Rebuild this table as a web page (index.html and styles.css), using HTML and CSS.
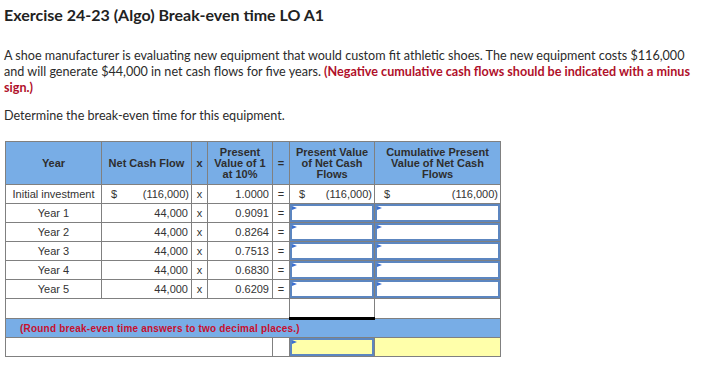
FILE: index.html
```html
<!DOCTYPE html>
<html>
<head>
<meta charset="utf-8">
<link rel="stylesheet" href="styles.css">
</head>
<body>
<div class="page">
  <h1 class="title">Exercise 24-23 (Algo) Break-even time LO A1</h1>
  <p class="intro">A shoe manufacturer is evaluating new equipment that would custom fit athletic shoes. The new equipment costs $116,000 and will generate $44,000 in net cash flows for five years. <strong class="warn">(Negative cumulative cash flows should be indicated with a minus</strong> <strong class="warn">sign.)</strong></p>
  <p class="ask">Determine the break-even time for this equipment.</p>

  <table class="grid">
    <colgroup>
      <col class="c-year"><col class="c-ncf"><col class="c-op"><col class="c-pv"><col class="c-eq"><col class="c-pvn"><col class="c-cum">
    </colgroup>
    <thead>
      <tr class="head">
        <th>Year</th>
        <th>Net Cash Flow</th>
        <th>x</th>
        <th>Present<br>Value of 1<br>at 10%</th>
        <th>=</th>
        <th>Present Value<br>of Net Cash<br>Flows</th>
        <th>Cumulative Present<br>Value of Net Cash<br>Flows</th>
      </tr>
    </thead>
    <tbody>
      <tr class="row">
        <td class="lbl">Initial investment</td>
        <td class="money"><span class="cur">$</span><span>(116,000)</span></td>
        <td class="op">x</td>
        <td class="num">1.0000</td>
        <td class="op">=</td>
        <td class="money"><span class="cur">$</span><span>(116,000)</span></td>
        <td class="money"><span class="cur">$</span><span>(116,000)</span></td>
      </tr>
      <tr class="row">
        <td class="lbl">Year 1</td>
        <td class="num">44,000</td>
        <td class="op">x</td>
        <td class="num">0.9091</td>
        <td class="op">=</td>
        <td class="inp"><div class="box"><i class="flag"></i></div></td>
        <td class="inp"><div class="box"><i class="flag"></i></div></td>
      </tr>
      <tr class="row">
        <td class="lbl">Year 2</td>
        <td class="num">44,000</td>
        <td class="op">x</td>
        <td class="num">0.8264</td>
        <td class="op">=</td>
        <td class="inp"><div class="box"><i class="flag"></i></div></td>
        <td class="inp"><div class="box"><i class="flag"></i></div></td>
      </tr>
      <tr class="row">
        <td class="lbl">Year 3</td>
        <td class="num">44,000</td>
        <td class="op">x</td>
        <td class="num">0.7513</td>
        <td class="op">=</td>
        <td class="inp"><div class="box"><i class="flag"></i></div></td>
        <td class="inp"><div class="box"><i class="flag"></i></div></td>
      </tr>
      <tr class="row">
        <td class="lbl">Year 4</td>
        <td class="num">44,000</td>
        <td class="op">x</td>
        <td class="num">0.6830</td>
        <td class="op">=</td>
        <td class="inp"><div class="box"><i class="flag"></i></div></td>
        <td class="inp"><div class="box"><i class="flag"></i></div></td>
      </tr>
      <tr class="row">
        <td class="lbl">Year 5</td>
        <td class="num">44,000</td>
        <td class="op">x</td>
        <td class="num">0.6209</td>
        <td class="op">=</td>
        <td class="inp"><div class="box"><i class="flag"></i></div></td>
        <td class="inp"><div class="box"><i class="flag"></i></div></td>
      </tr>
      <tr class="blank">
        <td colspan="5"></td>
        <td class="total"></td>
        <td></td>
      </tr>
      <tr class="note">
        <td colspan="7">(Round break-even time answers to two decimal places.)</td>
      </tr>
      <tr class="answer">
        <td colspan="4"></td>
        <td></td>
        <td class="inp yellow"><div class="box"><i class="flag"></i></div></td>
        <td class="yellow"></td>
      </tr>
    </tbody>
  </table>
</div>
</body>
</html>
```
FILE: styles.css
```css
html, body {
  margin: 0;
  padding: 0;
  background: #ffffff;
}

.page {
  padding: 6px 0 0 5px;
  font-family: Lato, "Open Sans", Arial, sans-serif;
  color: #2b2b2b;
}

.title {
  margin: 0 0 0 -1px;
  font-size: 16px;
  line-height: 18px;
  font-weight: 700;
  color: #222;
}

.intro {
  margin: 24px 0 0 -1px;
  max-width: 704px;
  font-size: 12.6px;
  line-height: 16px;
}

.warn {
  color: #b0102a;
  font-weight: 700;
}

.ask {
  margin: 12px 0 0 -1px;
  font-size: 12.6px;
  line-height: 16px;
}

.grid {
  margin-top: 17px;
  border-collapse: collapse;
  table-layout: fixed;
  width: 496px;
  font-family: "Liberation Sans", Arial, sans-serif;
  font-size: 11px;
  color: #333;
}

.c-year { width: 96px; }
.c-ncf { width: 90px; }
.c-op { width: 16px; }
.c-pv { width: 65px; }
.c-eq { width: 17px; }
.c-pvn { width: 85px; }
.c-cum { width: 126px; }

.grid th,
.grid td {
  border: 1px solid #808080;
  padding: 0;
}

.head th {
  background: #78ade6;
  height: 42px;
  font-weight: 700;
  text-align: center;
  line-height: 11px;
  color: #2e2e2e;
}

.row td {
  height: 18px;
  line-height: 12px;
  white-space: nowrap;
}

.lbl {
  text-align: center;
}

.num {
  text-align: right;
  padding-right: 3px !important;
}

.op {
  text-align: center;
}

.money > span {
  display: inline-block;
}

.money {
  padding: 0 2px 0 9px !important;
}

.money .cur {
  float: left;
}

.money span:last-child {
  float: right;
}

.inp {
  position: relative;
}

.box {
  position: absolute;
  inset: 0;
  border: 2px solid #5c86c0;
}

.flag {
  position: absolute;
  top: 0;
  left: 0;
  width: 0;
  height: 0;
  border-top: 2px solid transparent;
  border-bottom: 2px solid transparent;
  border-left: 5px solid #3b6fd0;
}

.blank td {
  height: 18px;
}

.blank .total {
  border-bottom: 3px solid #000;
}

.note td {
  background: #78ade6;
  height: 17px;
  padding-left: 14px;
  color: #c8102e;
  font-size: 10px;
  font-weight: 700;
  letter-spacing: 0.2px;
  white-space: nowrap;
}

.answer td {
  height: 18px;
}

.yellow {
  background: #ffffaa;
}
```
